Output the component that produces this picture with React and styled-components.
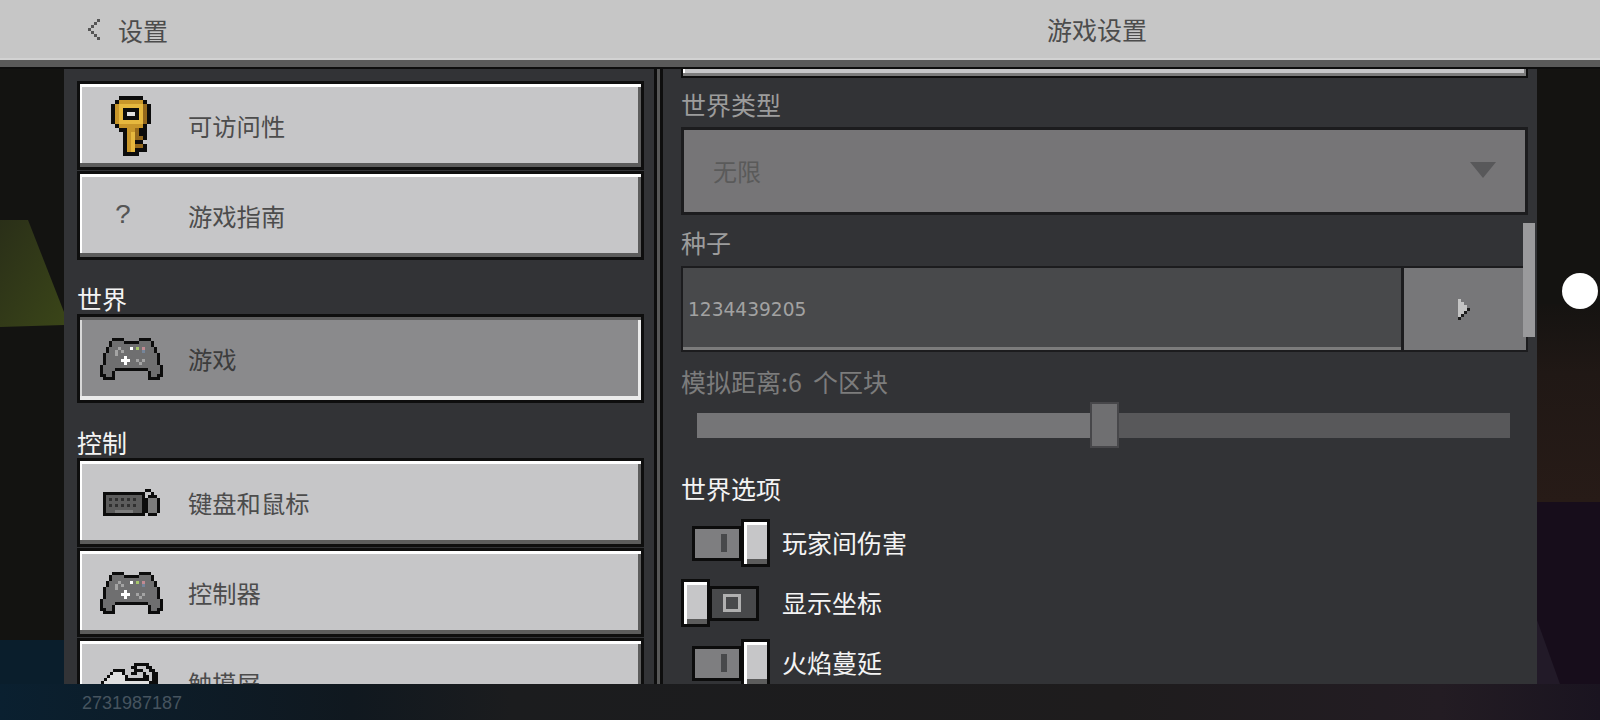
import React from 'react';
import styled, { createGlobalStyle } from 'styled-components';

const CJK = '"Noto Sans CJK SC", "Liberation Sans", sans-serif';

const GlobalStyle = createGlobalStyle`
  html, body {
    margin: 0;
    background: #111210;
    font-family: ${CJK};
  }
  * { box-sizing: border-box; }
`;

// pixel art helper: every char in a row is one square, '.' stays empty
const colors = {
  k: '#0c0c0c',
  y: '#c8962a',
  Y: '#e6b83e',
  d: '#94681c',
  w: '#e0e0e0',
  g: '#6f6f70',
  l: '#a4a4a4',
  W: '#ffffff',
  c: '#a6c66a',
  r: '#c28a92',
  b: '#75859a',
  m: '#7c7c7c',
  n: '#5c5c5c',
  s: '#303030',
  t: '#555555',
  L: '#c4c4c4',
  D: '#1c1c1c',
};

const Sprite = styled.svg`
  display: block;
  flex: none;
  shape-rendering: crispEdges;
`;

function Pixels({ rows, size = 3 }) {
  const w = Math.max(...rows.map((r) => r.length));
  return (
    <Sprite width={w * size} height={rows.length * size} viewBox={`0 0 ${w} ${rows.length}`}>
      {rows.map((row, y) =>
        row.split('').map((c, x) =>
          c === '.' ? null : <rect key={`${x}-${y}`} x={x} y={y} width="1" height="1" fill={colors[c]} />
        )
      )}
    </Sprite>
  );
}

const keyIcon = [
  '..kkkkkk..',
  '.kyyyyyyk.',
  'kyYYYYYYdk',
  'kyYkkkkYdk',
  'kyYkwwkYdk',
  'kyYkkkkYdk',
  'kyYYYYYYdk',
  '.kyyyyyyk.',
  '..kkyydkk.',
  '...kyYdkk.',
  '...kyYddk.',
  '...kyYkk..',
  '...kyYddk.',
  '...kyYkkk.',
  '...kkkk...',
];

const padIcon = [
  '....kkkk.....kkkk....',
  '...kggggkkkkkggggk...',
  '...kgggggggggggggk...',
  '..kggglgggWgcgrgggk..',
  '..kgglglggggggbgggk..',
  '.kggglgggggggggggggk.',
  '.kggggggWggggggggggk.',
  '.kgggggWWWgglglggggk.',
  '.kggggggWgggglgggggk.',
  'kgggggggggggggggggggk',
  'kggggkkkkkkkkkkkggggk',
  'kgggk...........kgggk',
  'kkggk...........kggkk',
  '.kkkk...........kkkk.',
];

const keyboardIcon = [
  '..............kk...',
  'kkkkkkkkkkkkkk..k..',
  'knnnnnnnnnnnnk.kkk.',
  'knsnsnsnsnsnnkkmmmk',
  'knnnnnnnnnnnnkkmmmk',
  'knsnsnsnsnsnnkkmmmk',
  'knnnnnnnnnnnnkkmmmk',
  'knnnmmmmmmnnnkkmmmk',
  'kkkkkkkkkkkkkk.kkk.',
];

const touchIcon = [
  '...........kkkkk....',
  '..........kk...kk...',
  '....kkkk...kkk..kk..',
  '...kwwwk..kk..k..kk.',
  '..kwwwwwk.....kk.kk.',
  '.kwwwwwwkkkkkkkk.kk.',
  'kwwwwwwwwwwwwwwwkkk.',
];

const backIcon = ['...t', '..t.', '.t..', 't...', '.t..', '..t.', '...t'];

const seedArrow = ['L...', 'LL..', 'LLL.', 'LLLD', 'LLD.', 'LD..', 'D...'];

const Page = styled.div`
  position: relative;
  width: 1600px;
  height: 720px;
  overflow: hidden;
  display: flex;
  flex-direction: column;
`;

const Scene = styled.svg`
  position: absolute;
  inset: 0;
  z-index: 0;
`;

const Header = styled.header`
  position: relative;
  z-index: 1;
  height: 69px;
  flex: none;
  display: flex;
  background: #c6c6c6;
  border-bottom: 2px solid #0e0e0e;
  box-shadow: inset 0 -7px 0 #5a5a5a, inset 0 -9px 0 #d2d2d2;
  color: #4c4c4c;
  font-size: 25px;
`;

const HeaderBack = styled.div`
  width: 663px;
  height: 59px;
  display: flex;
  align-items: center;
  gap: 18px;
  padding-left: 88px;
`;

const HeaderTitle = styled.div`
  width: 868px;
  height: 59px;
  line-height: 59px;
  text-align: center;
`;

const Body = styled.main`
  position: relative;
  z-index: 1;
  height: 615px;
  flex: none;
  display: flex;
  padding-left: 64px;
`;

const LeftPanel = styled.section`
  width: 590px;
  padding: 12px 10px 0 13px;
  background: #323336;
  overflow: hidden;
`;

const Divider = styled.div`
  width: 9px;
  background: #585858;
  border-left: 3px solid #0e0e0e;
  border-right: 3px solid #0e0e0e;
`;

const RightPanel = styled.section`
  position: relative;
  width: 874px;
  padding: 0 9px 0 18px;
  background: #323336;
  overflow: hidden;
`;

const SectionLabel = styled.div`
  height: ${(p) => p.$h}px;
  display: flex;
  align-items: flex-end;
  padding-bottom: 1px;
  color: #f4f4f4;
  font-size: 25px;
  line-height: 30px;
`;

const MenuButton = styled.div`
  height: 89px;
  margin-bottom: 1px;
  display: flex;
  align-items: center;
  border: 3px solid #0e0e0e;
  font-size: 24.3px;
  color: ${(p) => (p.$active ? '#3c3c3c' : '#4c4c4c')};
  background: ${(p) => (p.$active ? '#8a8a8c' : '#c6c6c8')};
  box-shadow: ${(p) =>
    p.$active
      ? 'inset 0 3px 0 #5e5e5e, inset 0 -4px 0 #ebebeb, inset -3px 0 0 #ebebeb, inset 2px 0 0 #d8d8d8'
      : 'inset 0 3px 0 #ffffff, inset 0 -4px 0 #5c5c5c, inset 2px 0 0 #ffffff, inset -3px 0 0 #5c5c5c'};
`;

const IconSlot = styled.div`
  width: 102px;
  margin-right: 6px;
  display: flex;
  justify-content: center;
  align-items: center;
  align-self: ${(p) => (p.$top ? 'flex-start' : 'center')};
  margin-top: ${(p) => p.$top || 0}px;
`;

const Question = styled.span`
  margin-right: 15px;
  font-family: "Liberation Mono", monospace;
  font-size: 28px;
  color: #555;
`;

const PartialButton = styled.div`
  height: 9px;
  border: 2px solid #0e0e0e;
  border-top: 0;
  background: #c6c6c8;
  box-shadow: inset 0 -3px 0 #7c7c7c, inset 2px 0 0 #ffffff, inset -2px 0 0 #7c7c7c;
`;

const FieldLabel = styled.div`
  height: ${(p) => p.$h}px;
  display: flex;
  align-items: center;
  padding-top: ${(p) => p.$pad}px;
  font-size: 25px;
  line-height: 30px;
  white-space: pre;
  color: ${(p) => p.$color || '#9c9c9c'};
`;

const Dropdown = styled.div`
  height: 88px;
  display: flex;
  align-items: center;
  justify-content: space-between;
  padding: 0 29px 2px 29px;
  border: 3px solid #1c1c1e;
  background: #767577;
  color: #5a5a5a;
  font-size: 24px;
`;

const DropArrow = styled.div`
  width: 0;
  height: 0;
  border-left: 13px solid transparent;
  border-right: 13px solid transparent;
  border-top: 16px solid #58585a;
`;

const SeedRow = styled.div`
  height: 86px;
  display: flex;
  gap: 3px;
  background: #1c1c1e;
  border: 2px solid #1c1c1e;
`;

const SeedInput = styled.div`
  flex: 1;
  display: flex;
  align-items: center;
  padding-left: 5px;
  background: #48494b;
  box-shadow: inset 0 -3px 0 #7c7c7c;
  color: #a2a2a2;
  font-family: "DejaVu Sans", sans-serif;
  font-size: 18.6px;
`;

const SeedButton = styled.div`
  width: 122px;
  display: flex;
  align-items: center;
  justify-content: center;
  background: #777779;
  padding-right: 2px;
`;

const Slider = styled.div`
  height: 46px;
  margin: 0 18px 0 16px;
  display: flex;
  align-items: center;
`;

const SliderFill = styled.div`
  height: 25px;
  width: ${(p) => p.$w}px;
  background: #757577;
`;

const SliderRest = styled.div`
  height: 25px;
  flex: 1;
  background: #58585a;
`;

const SliderThumb = styled.div`
  width: 29px;
  height: 46px;
  background: #6f6f71;
  border: 2px solid #47474a;
`;

const ToggleRow = styled.div`
  height: 60px;
  display: flex;
  align-items: flex-start;
  gap: 11px;
  color: #f4f4f4;
  font-size: 25px;
  line-height: 46px;
`;

const Toggle = styled.div`
  width: 90px;
  height: 48px;
  display: flex;
  align-items: center;
  justify-content: ${(p) => (p.$on ? 'flex-end' : 'flex-start')};
  flex-direction: ${(p) => (p.$on ? 'row' : 'row-reverse')};
  padding-right: ${(p) => (p.$on ? '1px' : '0')};
`;

const Track = styled.div`
  width: 50px;
  height: 35px;
  display: flex;
  align-items: center;
  justify-content: center;
  margin: ${(p) => (p.$on ? '0 -1px 0 0' : '0 12px 0 -1px')};
  border: 3px solid #0c0c0c;
  background: ${(p) => (p.$on ? '#7e7e80' : '#48494b')};
`;

const OnPip = styled.div`
  width: 6px;
  height: 18px;
  margin-left: 14px;
  background: #48494b;
`;

const OffPip = styled.div`
  width: 18px;
  height: 18px;
  margin-right: 4px;
  border: 3px solid #b0b0b0;
`;

const Thumb = styled.div`
  position: relative;
  width: 29px;
  height: 48px;
  border: 3px solid #0c0c0c;
  background: #c6c6c8;
  box-shadow: inset 0 3px 0 #ffffff, inset 3px 0 0 #ffffff, inset 0 -5px 0 #5c5c5c;
`;

const ScrollBar = styled.div`
  position: absolute;
  left: 860px;
  top: 154px;
  width: 12px;
  height: 114px;
  background: #9a9a9c;
`;

const Footer = styled.footer`
  position: relative;
  z-index: 1;
  flex: 1;
  display: flex;
  align-items: center;
  padding: 2px 0 0 82px;
  font-family: "Liberation Sans", sans-serif;
  font-size: 18px;
  color: #46545f;
`;

const TouchDot = styled.div`
  position: absolute;
  z-index: 2;
  left: 1562px;
  top: 273px;
  width: 36px;
  height: 36px;
  border-radius: 50%;
  background: #ffffff;
`;

function Row({ icon, label, active, iconTop }) {
  return (
    <MenuButton $active={active}>
      <IconSlot $top={iconTop}>{icon}</IconSlot>
      {label}
    </MenuButton>
  );
}

function OptionToggle({ on, label }) {
  return (
    <ToggleRow>
      <Toggle $on={on}>
        <Track $on={on}>{on ? <OnPip /> : <OffPip />}</Track>
        <Thumb />
      </Toggle>
      {label}
    </ToggleRow>
  );
}

export default function App() {
  return (
    <Page>
      <GlobalStyle />
      <Scene width="1600" height="720" viewBox="0 0 1600 720">
        <defs>
          <linearGradient id="olive" x1="0" y1="0" x2="1" y2="1">
            <stop offset="0" stopColor="#2a2f18" />
            <stop offset="1" stopColor="#3a4518" />
          </linearGradient>
          <linearGradient id="strip" x1="0" y1="0" x2="1" y2="0">
            <stop offset="0" stopColor="#0a2030" />
            <stop offset="0.22" stopColor="#10181f" />
            <stop offset="0.32" stopColor="#1b1c1e" />
            <stop offset="0.7" stopColor="#1e1c1d" />
            <stop offset="0.9" stopColor="#231c23" />
            <stop offset="1" stopColor="#1a1420" />
          </linearGradient>
          <linearGradient id="brown" x1="0" y1="0" x2="0" y2="1">
            <stop offset="0" stopColor="#151311" />
            <stop offset="0.35" stopColor="#201815" />
            <stop offset="1" stopColor="#271b17" />
          </linearGradient>
        </defs>
        <rect width="1600" height="720" fill="#131311" />
        <polygon points="0,220 28,220 64,312 64,325 0,327" fill="url(#olive)" />
        <rect x="0" y="640" width="64" height="44" fill="#0a1e2c" />
        <rect x="0" y="684" width="1600" height="36" fill="url(#strip)" />
        <rect x="1537" y="69" width="63" height="235" fill="#141311" />
        <rect x="1537" y="304" width="63" height="198" fill="url(#brown)" />
        <rect x="1537" y="502" width="63" height="182" fill="#170d1b" />
        <polygon points="1537,620 1560,684 1537,684" fill="#221a28" />
      </Scene>

      <Header>
        <HeaderBack>
          <Pixels rows={backIcon} />
          设置
        </HeaderBack>
        <HeaderTitle>游戏设置</HeaderTitle>
      </Header>

      <Body>
        <LeftPanel>
          <Row icon={<Pixels rows={keyIcon} size={4} />} label="可访问性" />
          <Row icon={<Question>?</Question>} label="游戏指南" />
          <SectionLabel $h={53}>世界</SectionLabel>
          <Row active icon={<Pixels rows={padIcon} />} label="游戏" />
          <SectionLabel $h={54}>控制</SectionLabel>
          <Row icon={<Pixels rows={keyboardIcon} />} label="键盘和鼠标" />
          <Row icon={<Pixels rows={padIcon} />} label="控制器" />
          <Row iconTop={22} icon={<Pixels rows={touchIcon} />} label="触摸屏" />
        </LeftPanel>

        <Divider />

        <RightPanel>
          <PartialButton />
          <FieldLabel $h={49} $pad={2}>世界类型</FieldLabel>
          <Dropdown>
            无限
            <DropArrow />
          </Dropdown>
          <FieldLabel $h={51} $pad={2}>种子</FieldLabel>
          <SeedRow>
            <SeedInput>1234439205</SeedInput>
            <SeedButton>
              <Pixels rows={seedArrow} />
            </SeedButton>
          </SeedRow>
          <FieldLabel $h={50} $pad={8} $color="#7c7c7c">模拟距离:6  个区块</FieldLabel>
          <Slider>
            <SliderFill $w={393} />
            <SliderThumb />
            <SliderRest />
          </Slider>
          <FieldLabel $h={71} $pad={8} $color="#f4f4f4">世界选项</FieldLabel>
          <OptionToggle on label="玩家间伤害" />
          <OptionToggle label="显示坐标" />
          <OptionToggle on label="火焰蔓延" />
          <ScrollBar />
        </RightPanel>
      </Body>

      <Footer>2731987187</Footer>
      <TouchDot />
    </Page>
  );
}
